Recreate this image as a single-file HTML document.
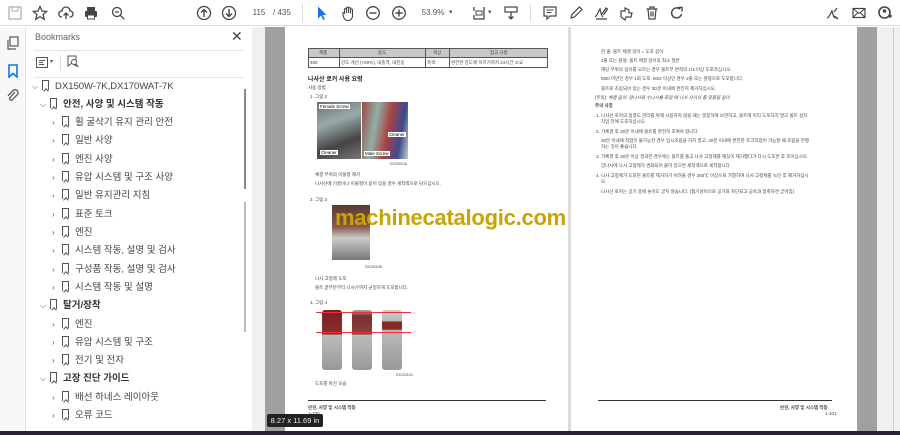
<!DOCTYPE html>
<html><head><meta charset="utf-8"><style>
*{margin:0;padding:0;box-sizing:border-box}
body{width:900px;height:435px;overflow:hidden;background:#fff;font-family:"Liberation Sans","Noto Sans CJK KR",sans-serif;position:relative}
.a{position:absolute}
.tb{left:0;top:0;width:900px;height:26px;background:#fff;border-bottom:1px solid #ddd}
.ic{position:absolute;top:5px;width:16px;height:16px}
.strip{left:0;top:27px;width:26px;height:404px;background:#f8f8f8;border-right:1px solid #e2e2e2}
.bm{left:26px;top:27px;width:226px;height:404px;background:#fff}
.bi{position:absolute;font-size:9.5px;color:#444;white-space:nowrap;height:18px;line-height:18px}
.bi b{font-weight:bold;color:#333}
.chev{display:inline-block;width:10px;font-size:8px;color:#555}
.flag{display:inline-block;width:7px;height:10px;border:1.3px solid #555;border-bottom:none;vertical-align:-1px;margin-right:6px;position:relative}
.flag:after{content:"";position:absolute;left:0.5px;bottom:-3px;width:3px;height:3px;border-right:1.3px solid #555;border-top:1.3px solid #555;transform:rotate(-45deg)}
.pg{background:#fff}
.t{position:absolute;font-size:4.5px;color:#444;white-space:nowrap}
</style></head><body>
<div class="a tb">
<svg class="ic" style="left:7px" viewBox="0 0 16 16"><rect x="2" y="2" width="12" height="12" fill="none" stroke="#aaa" stroke-width="1.2"/><rect x="5" y="2" width="6" height="4" fill="none" stroke="#aaa"/></svg>
<svg class="ic" style="left:32px" viewBox="0 0 16 16"><path d="M8 1.5l2 4.5 4.8.4-3.7 3.1 1.2 4.7L8 11.7 3.7 14.2l1.2-4.7L1.2 6.4 6 6z" fill="none" stroke="#444" stroke-width="1.2"/></svg>
<svg class="ic" style="left:58px" viewBox="0 0 16 16"><path d="M4 12H3.5A3 3 0 0 1 4 6a4 4 0 0 1 8 0 3 3 0 0 1 0 6h-.5M8 14V8M5.5 10.5L8 8l2.5 2.5" fill="none" stroke="#444" stroke-width="1.3"/></svg>
<svg class="ic" style="left:83px" viewBox="0 0 16 16"><rect x="4" y="2" width="8" height="4" fill="#444"/><rect x="2" y="6" width="12" height="6" rx="1" fill="#444"/><rect x="4.5" y="10" width="7" height="4" fill="#fff" stroke="#444"/></svg>
<svg class="ic" style="left:110px" viewBox="0 0 16 16"><circle cx="7" cy="7" r="4.5" fill="none" stroke="#444" stroke-width="1.3"/><path d="M10.3 10.3l4 4M5 7h4" stroke="#444" stroke-width="1.3"/></svg>
<svg class="ic" style="left:196px" viewBox="0 0 16 16"><circle cx="8" cy="8" r="6.5" fill="none" stroke="#444" stroke-width="1.3"/><path d="M8 12V4.5M5 7.5l3-3 3 3" fill="none" stroke="#444" stroke-width="1.4"/></svg>
<svg class="ic" style="left:221px" viewBox="0 0 16 16"><circle cx="8" cy="8" r="6.5" fill="none" stroke="#444" stroke-width="1.3"/><path d="M8 4v7.5M5 8.5l3 3 3-3" fill="none" stroke="#444" stroke-width="1.4"/></svg>
<div class="a" style="left:247px;top:6px;width:24px;height:14px;font-size:8px;color:#555;text-align:center;line-height:14px">115</div>
<div class="a" style="left:273px;top:6px;font-size:8px;color:#555;line-height:14px">/ 435</div>
<div class="a" style="left:302px;top:4px;width:1px;height:18px;background:#ddd"></div>
<svg class="ic" style="left:314px" viewBox="0 0 16 16"><path d="M4 1.5v12l3-3 2.2 4.5 1.6-.8-2.2-4.3H12.5z" fill="#1473e6"/></svg>
<svg class="ic" style="left:340px" viewBox="0 0 16 16"><path d="M4.5 9V4.5a1 1 0 0 1 2 0V8V3a1 1 0 0 1 2 0v5V3.5a1 1 0 0 1 2 0V8.5V5a1 1 0 0 1 2 0v5.5a4.5 4.5 0 0 1-9 1L2.8 8.8a1 1 0 0 1 1.7-1z" fill="none" stroke="#444" stroke-width="1.1"/></svg>
<svg class="ic" style="left:365px" viewBox="0 0 16 16"><circle cx="8" cy="8" r="6.3" fill="none" stroke="#444" stroke-width="1.3"/><path d="M4.5 8h7" stroke="#444" stroke-width="1.4"/></svg>
<svg class="ic" style="left:391px" viewBox="0 0 16 16"><circle cx="8" cy="8" r="6.3" fill="none" stroke="#444" stroke-width="1.3"/><path d="M4.5 8h7M8 4.5v7" stroke="#444" stroke-width="1.4"/></svg>
<div class="a" style="left:418px;top:6px;width:30px;height:14px;font-size:8px;color:#555;line-height:14px;text-align:center">53.9%</div>
<div class="a" style="left:449px;top:8px;font-size:7px;color:#555">▾</div>
<svg class="ic" style="left:471px" viewBox="0 0 16 16"><path d="M3 2v4M3 10v4h10V2" fill="none" stroke="#444" stroke-width="1.3"/><path d="M5 6h6v4H5z" fill="none" stroke="#444"/></svg>
<div class="a" style="left:488px;top:8px;font-size:7px;color:#555">▾</div>
<svg class="ic" style="left:503px" viewBox="0 0 16 16"><rect x="2" y="2" width="12" height="5" fill="none" stroke="#444" stroke-width="1.2"/><path d="M8 7v7M5.5 11.5L8 14l2.5-2.5" fill="none" stroke="#444" stroke-width="1.3"/></svg>
<div class="a" style="left:530px;top:4px;width:1px;height:18px;background:#ddd"></div>
<svg class="ic" style="left:542px" viewBox="0 0 16 16"><path d="M2 2h12v9H8l-3 3v-3H2z" fill="none" stroke="#444" stroke-width="1.2"/><path d="M4.5 5h7M4.5 7.5h5" stroke="#444"/></svg>
<svg class="ic" style="left:568px" viewBox="0 0 16 16"><path d="M3 13l1-3.5L11.5 2l2.5 2.5L6.5 12z" fill="none" stroke="#444" stroke-width="1.2"/></svg>
<svg class="ic" style="left:593px" viewBox="0 0 16 16"><path d="M2 12c2-1 3-5 5-8 1 3 1 7 3 8M3 14h11M9 9l4-6 1.5 1-4 6" fill="none" stroke="#444" stroke-width="1.2"/></svg>
<svg class="ic" style="left:618px" viewBox="0 0 16 16"><path d="M3 6h4V3l4 2v3h3l-1 4H8l-1 3-4-3z" fill="none" stroke="#444" stroke-width="1.2"/></svg>
<svg class="ic" style="left:644px" viewBox="0 0 16 16"><path d="M2.5 4h11M6 4V2h4v2M4 4l1 10h6l1-10M7 6.5v5M9 6.5v5" fill="none" stroke="#444" stroke-width="1.2"/></svg>
<svg class="ic" style="left:669px" viewBox="0 0 16 16"><path d="M12.5 9A5 5 0 1 1 11 4.2" fill="none" stroke="#444" stroke-width="1.4"/><path d="M9 2.5h4v4" fill="none" stroke="#444" stroke-width="1.4"/></svg>
<svg class="ic" style="left:824px" viewBox="0 0 16 16"><path d="M3 13c2 0 3-4 5-7 1 3 1 6 3 7M10 7l3-4" fill="none" stroke="#444" stroke-width="1.2"/><path d="M10 11l4 3" stroke="#444" stroke-width="1.5"/></svg>
<svg class="ic" style="left:851px" viewBox="0 0 16 16"><rect x="2" y="3.5" width="12" height="9" fill="none" stroke="#444" stroke-width="1.2"/><path d="M2 3.5l6 5 6-5M2 12.5l4.5-4.5M14 12.5L9.5 8" fill="none" stroke="#444"/></svg>
<svg class="ic" style="left:877px" viewBox="0 0 16 16"><circle cx="7.5" cy="7.5" r="5.5" fill="none" stroke="#444" stroke-width="1.6"/><circle cx="7.5" cy="6" r="1.8" fill="#444"/><path d="M11 11h4M13 9v4" stroke="#444" stroke-width="1.4"/></svg>
</div>

<div class="a strip">
<svg class="a" style="left:6px;top:9px" width="14" height="14" viewBox="0 0 14 14"><rect x="4" y="1" width="8" height="9" fill="none" stroke="#555" stroke-width="1.2"/><path d="M2 4v9h8" fill="none" stroke="#555" stroke-width="1.2"/></svg>
<svg class="a" style="left:7px;top:37px" width="12" height="14" viewBox="0 0 12 14"><path d="M2 1h8v12l-4-3.5L2 13z" fill="none" stroke="#1473e6" stroke-width="1.6"/></svg>
<svg class="a" style="left:6px;top:62px" width="14" height="14" viewBox="0 0 14 14"><path d="M9 3L4 8.5a1.6 1.6 0 0 0 2.3 2.3L11.5 5.5a3 3 0 0 0-4.2-4.2L2 6.8" fill="none" stroke="#555" stroke-width="1.3"/></svg>
</div>

<div class="a bm">
<div class="a" style="left:9px;top:5px;font-size:9px;color:#666">Bookmarks</div>
<div class="a" style="left:205px;top:1px;font-size:14px;color:#444">✕</div>
<div class="a" style="left:8px;top:23px;width:210px;height:1px;background:#e5e5e5"></div>
<svg class="a" style="left:10px;top:30px" width="12" height="11" viewBox="0 0 12 11"><rect x="0.5" y="0.5" width="11" height="10" fill="none" stroke="#555"/><path d="M3 3.5h6M3 5.5h4M3 7.5h5" stroke="#555"/></svg>
<div class="a" style="left:24px;top:31px;font-size:6px;color:#555">▾</div>
<div class="a" style="left:34px;top:28px;width:1px;height:15px;background:#ddd"></div>
<svg class="a" style="left:41px;top:28px" width="12" height="14" viewBox="0 0 12 14"><path d="M1 1h8v10l-4-3-4 3z" fill="none" stroke="#555"/><circle cx="7" cy="7" r="2.5" fill="#fff" stroke="#555"/><path d="M9 9l2.5 3" stroke="#555"/></svg>
<div class="a" style="left:8px;top:50px;width:210px;height:1px;background:#e5e5e5"></div>
<div class="a" style="left:218px;top:62px;width:2px;height:100px;background:#888"></div>
<div class="a" style="left:218px;top:175px;width:2px;height:130px;background:#bbb"></div>

<div class="bi" style="left:6px;top:51px"><span class="chev">⌵</span><span class="flag"></span>DX150W-7K,DX170WAT-7K</div>
<div class="bi" style="left:14px;top:69px"><span class="chev">⌵</span><span class="flag"></span><b>안전, 사양 및 시스템 작동</b></div>
<div class="bi" style="left:26px;top:87px"><span class="chev">›</span><span class="flag"></span>휠 굴삭기 유지 관리 안전</div>
<div class="bi" style="left:26px;top:105px"><span class="chev">›</span><span class="flag"></span>일반 사양</div>
<div class="bi" style="left:26px;top:124px"><span class="chev">›</span><span class="flag"></span>엔진 사양</div>
<div class="bi" style="left:26px;top:142px"><span class="chev">›</span><span class="flag"></span>유압 시스템 및 구조 사양</div>
<div class="bi" style="left:26px;top:160px"><span class="chev">›</span><span class="flag"></span>일반 유지관리 지침</div>
<div class="bi" style="left:26px;top:179px"><span class="chev">›</span><span class="flag"></span>표준 토크</div>
<div class="bi" style="left:26px;top:197px"><span class="chev">›</span><span class="flag"></span>엔진</div>
<div class="bi" style="left:26px;top:215px"><span class="chev">›</span><span class="flag"></span>시스템 작동, 설명 및 검사</div>
<div class="bi" style="left:26px;top:234px"><span class="chev">›</span><span class="flag"></span>구성품 작동, 설명 및 검사</div>
<div class="bi" style="left:26px;top:252px"><span class="chev">›</span><span class="flag"></span>시스템 작동 및 설명</div>
<div class="bi" style="left:14px;top:270px"><span class="chev">⌵</span><span class="flag"></span><b>탈거/장착</b></div>
<div class="bi" style="left:26px;top:289px"><span class="chev">›</span><span class="flag"></span>엔진</div>
<div class="bi" style="left:26px;top:307px"><span class="chev">›</span><span class="flag"></span>유압 시스템 및 구조</div>
<div class="bi" style="left:26px;top:325px"><span class="chev">›</span><span class="flag"></span>전기 및 전자</div>
<div class="bi" style="left:14px;top:343px"><span class="chev">⌵</span><span class="flag"></span><b>고장 진단 가이드</b></div>
<div class="bi" style="left:26px;top:362px"><span class="chev">›</span><span class="flag"></span>배선 하네스 레이아웃</div>
<div class="bi" style="left:26px;top:380px"><span class="chev">›</span><span class="flag"></span>오류 코드</div>
</div>

<div class="a" style="left:252px;top:27px;width:13px;height:404px;background:#f0f0f0"></div>
<div class="a" style="left:265px;top:27px;width:20px;height:404px;background:#a0a0a0"></div>
<div class="a pg" style="left:285px;top:27px;width:283px;height:404px"></div>
<div class="a" style="left:568px;top:27px;width:3px;height:404px;background:#dcdcdc"></div>
<div class="a pg" style="left:571px;top:27px;width:286px;height:404px"></div>
<div class="a" style="left:857px;top:27px;width:20px;height:404px;background:#a0a0a0"></div>
<div class="a" style="left:877px;top:27px;width:23px;height:404px;background:#f0f0f0"></div>
<div class="a" style="left:893px;top:27px;width:1px;height:404px;background:#ccc"></div>

<!-- page 1 -->
<div class="a" style="left:308px;top:48px;width:240px;height:20px;border:1px solid #555"></div>
<div class="a" style="left:308px;top:48px;width:240px;height:10px;background:#c8c8c8;border:1px solid #555"></div>
<div class="a" style="left:339px;top:48px;width:1px;height:20px;background:#555"></div>
<div class="a" style="left:425px;top:48px;width:1px;height:20px;background:#555"></div>
<div class="a" style="left:449px;top:48px;width:1px;height:20px;background:#555"></div>
<div class="t" style="left:319px;top:50px">제품</div><div class="t" style="left:378px;top:50px">용도</div><div class="t" style="left:433px;top:50px">색상</div><div class="t" style="left:490px;top:50px">참고 사항</div>
<div class="t" style="left:310px;top:60px">480</div><div class="t" style="left:341px;top:60px">강도 개선 (+50%), 내충격, 내진동</div><div class="t" style="left:427px;top:60px">흑색</div><div class="t" style="left:451px;top:60px">완전한 강도에 이르기까지 24시간 소요</div>
<div class="t" style="left:308px;top:74px;font-size:6px;font-weight:bold;color:#222">나사산 로커 사용 요령</div>
<div class="t" style="left:308px;top:85px">사용 방법</div>
<div class="t" style="left:310px;top:94px">1. 그림 2</div>
<div class="a" style="left:317px;top:102px;width:44px;height:57px;background:linear-gradient(160deg,#6b6f6c,#9aa,#444 70%,#777)"></div>
<div class="a" style="left:362px;top:102px;width:46px;height:57px;background:linear-gradient(100deg,#9a4a42,#8fb0a8 30%,#a44 55%,#3a4a90 80%,#ccc)"></div>
<div class="a" style="left:319px;top:104px;font-size:4.5px;background:#fff;padding:0 1px">Female Screw</div>
<div class="a" style="left:320px;top:150px;font-size:4.5px;background:#fff;padding:0 1px">Cleaner</div>
<div class="a" style="left:364px;top:151px;font-size:4.5px;background:#fff;padding:0 1px">Male Screw</div>
<div class="a" style="left:388px;top:132px;font-size:4.5px;background:#fff;padding:0 1px">Cleaner</div>
<div class="t" style="left:390px;top:162px;font-size:3.5px">DX23010A</div>
<div class="t" style="left:315px;top:172px">체결 부위의 이물질 제거</div>
<div class="t" style="left:315px;top:181px">나사산에 기름이나 이물질이 묻어 있을 경우 세척액으로 닦으십시오.</div>
<div class="t" style="left:310px;top:197px">2. 그림 3</div>
<div class="a" style="left:332px;top:205px;width:38px;height:55px;background:linear-gradient(180deg,#5a3a30,#8a5a50 40%,#ccc 60%,#777)"></div>
<div class="t" style="left:365px;top:265px;font-size:3.5px">DX23010B</div>
<div class="t" style="left:315px;top:276px">나사 고정제 도포</div>
<div class="t" style="left:315px;top:285px">볼트 끝부분부터 나사산까지 균일하게 도포합니다.</div>
<div class="t" style="left:310px;top:300px">3. 그림 4</div>
<div class="a" style="left:322px;top:310px;width:20px;height:60px;border-radius:3px;background:linear-gradient(180deg,#7a2020,#8a3030 40%,#bbb 42%,#999)"></div>
<div class="a" style="left:352px;top:310px;width:20px;height:60px;border-radius:3px;background:linear-gradient(180deg,#aaa,#7a3030 10%,#8a4040 40%,#bbb 42%,#999)"></div>
<div class="a" style="left:382px;top:310px;width:20px;height:60px;border-radius:3px;background:linear-gradient(180deg,#ccc,#bbb 18%,#8a2a20 20%,#8a2a20 32%,#bbb 34%,#999)"></div>
<div class="a" style="left:316px;top:312px;width:95px;height:1px;background:#e33"></div>
<div class="a" style="left:316px;top:332px;width:95px;height:1px;background:#e33"></div>
<div class="t" style="left:396px;top:373px;font-size:3.5px">DX23010C</div>
<div class="t" style="left:315px;top:381px">도포를 마친 모습</div>
<div class="a" style="left:308px;top:400px;width:238px;height:1px;background:#333"></div>
<div class="t" style="left:308px;top:405px;font-weight:bold">안전, 사양 및 시스템 작동</div>
<div class="t" style="left:308px;top:411px">1-100</div>

<!-- page 2 -->
<div class="t" style="left:601px;top:49px">한 줄: 볼트 체결 길이 = 도포 길이</div>
<div class="t" style="left:601px;top:58px">2줄 또는 원형: 볼트 체결 길이의 최소 절반</div>
<div class="t" style="left:601px;top:67px">해당 부위의 길이를 모르는 경우 볼트부 면적의 1/3 이상 도포하십시오.</div>
<div class="t" style="left:601px;top:76px">M20 미만인 경우 1회 도포, M22 이상인 경우 2줄 또는 원형으로 도포합니다.</div>
<div class="t" style="left:601px;top:86px">볼트로 조립되어 있는 경우 3D분 이내에 완전히 제거하십시오.</div>
<div class="t" style="left:595px;top:95px">[주의]: <i>체결 길이: 암나사와 수나사를 조일 때 나사 사이의 총 맞물림 길이</i></div>
<div class="t" style="left:595px;top:103px;font-weight:bold">주의 사항</div>
<div class="t" style="left:596px;top:113px">1. 나사산 로커의 점결도 관리를 위해 사용하지 않을 때는 밀봉하여 보관하고, 볼트에 미리 도포하지 말고 볼트 설치</div>
<div class="t" style="left:601px;top:119px">작업 전에 도포하십시오.</div>
<div class="t" style="left:596px;top:129px">2. 가체결 후 30분 이내에 볼트를 완전히 조여야 합니다.</div>
<div class="t" style="left:601px;top:138px">30분 이내에 작업이 불가능한 경우 임시조립을 하지 말고, 30분 이내에 완전한 토크작업이 가능할 때 조립을 진행</div>
<div class="t" style="left:601px;top:144px">하는 것이 좋습니다.</div>
<div class="t" style="left:596px;top:154px">3. 가체결 후 30분 이상 경과한 경우에는 볼트를 풀고 나사 고정제를 깨끗이 제거했다가 다시 도포한 후 조이십시오.</div>
<div class="t" style="left:601px;top:163px">암나사에 나사 고정제가 경화되어 붙어 있으면 세척액으로 세척합니다.</div>
<div class="t" style="left:596px;top:173px">4. 나사 고정제가 도포된 볼트를 제거하기 어려울 경우 260℃ 이상으로 가열하여 나사 고정제를 녹인 후 제거하십시</div>
<div class="t" style="left:601px;top:179px">오.</div>
<div class="t" style="left:601px;top:189px">나사산 로커는 공기 중에 놓아도 굳지 않습니다. (혐기성이므로 공기와 차단되고 금속과 접촉하면 굳어짐)</div>
<div class="a" style="left:598px;top:400px;width:234px;height:1px;background:#333"></div>
<div class="t" style="left:780px;top:405px;font-weight:bold">안전, 사양 및 시스템 작동</div>
<div class="t" style="left:825px;top:411px">1-101</div>

<div class="a" style="left:335px;top:205px;font-size:22px;font-weight:bold;color:#c9a400;letter-spacing:-0.25px;white-space:nowrap">machinecatalogic.com</div>

<div class="a" style="left:267px;top:414px;width:56px;height:13px;background:#222;border-radius:2px;color:#eee;font-size:7.5px;line-height:13px;text-align:center">8.27 x 11.69 in</div>
<div class="a" style="left:0;top:431px;width:900px;height:4px;background:#2a2230"></div>
</body></html>
